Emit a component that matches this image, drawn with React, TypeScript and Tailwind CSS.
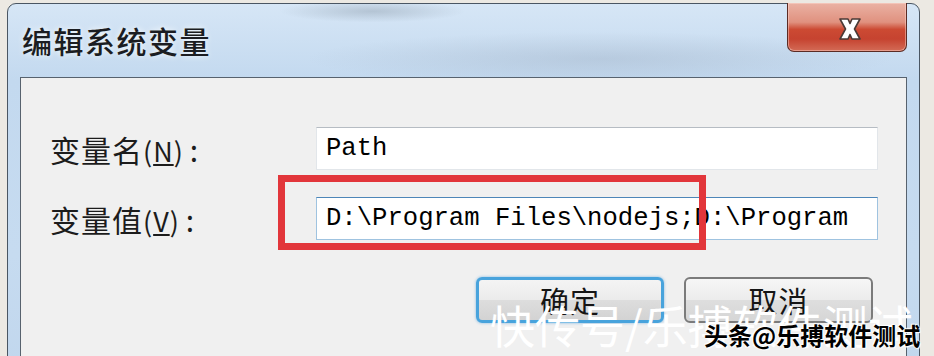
import React from 'react';

const cjk = "font-['Noto_Sans_CJK_SC','Noto_Sans',sans-serif]";
const mono = "font-['Liberation_Mono','DejaVu_Sans_Mono',monospace]";

const CloseIcon: React.FC = () => (
    <svg width="28" height="28" viewBox="0 0 28 28">
        <path
            d="M4 4 L12 4 L14 8.5 L16 4 L24 4 L18.5 14 L24 24 L16 24 L14 19.5 L12 24 L4 24 L9.5 14 Z"
            fill="#ffffff"
            stroke="#4a3a36"
            strokeWidth="1.6"
            strokeLinejoin="round"
        />
    </svg>
);

const Field: React.FC<{ label: string; hotkey: string; value: string; focused?: boolean }> = ({
    label,
    hotkey,
    value,
    focused,
}) => (
    <div className="flex items-center h-[43px]">
        <div className={`w-[266px] text-[30px] leading-none tracking-[1px] text-[#1c1c1c] ${cjk}`}>
            {label}
            <span className="text-[27px]">
                (<span className="underline underline-offset-2">{hotkey}</span>)
            </span>
            <span className="ml-[6px]">:</span>
        </div>
        <div
            className={`w-[562px] h-[43px] bg-white flex items-center pl-[9px] overflow-hidden whitespace-nowrap border ${
                focused
                    ? 'border-[#9fc3e0] border-t-[#4d86b8]'
                    : 'border-[#e2e6ea] border-t-[#b6bcc3]'
            }`}
        >
            <span className={`text-[25.6px] leading-none text-black ${mono}`}>{value}</span>
        </div>
    </div>
);

const App: React.FC = () => {
    return (
        <div className={`relative w-[934px] h-[356px] overflow-hidden bg-[#ece9e3] pl-[7px] pt-[3px] ${cjk}`}>
            <div className="w-[913px] h-[420px] rounded-t-[9px] border border-[#4a5663] bg-[linear-gradient(180deg,#d6e6f6_0%,#c3d9ef_18%,#c6dbf0_60%,#bfd5ec_100%)] flex flex-col">
                <div className="h-[73px] flex items-start justify-between pl-[14px] pr-[12px] bg-[radial-gradient(ellipse_at_40%_10%,rgba(120,135,150,0.35),transparent_12%),radial-gradient(ellipse_at_65%_75%,rgba(140,155,175,0.28),transparent_35%)]">
                    <div className="mt-[21px] text-[30px] leading-none font-medium tracking-[1.5px] text-[#1b1d22] [text-shadow:0_0_6px_rgba(255,255,255,0.9)]">
                        编辑系统变量
                    </div>
                    <div className="-mt-px w-[120px] h-[49px] rounded-b-[7px] border border-t-0 border-[#5b2b24] bg-[linear-gradient(180deg,#eab2a4_0%,#e0917f_40%,#cc4a33_55%,#c64330_75%,#d36b56_100%)] flex items-center justify-center shadow-[inset_0_0_0_1px_rgba(255,220,210,0.45)]">
                        <div className="ml-[6px] mt-[4px]">
                            <CloseIcon />
                        </div>
                    </div>
                </div>
                <div className="mx-[12px] flex-1 border border-[#57626e] bg-[#f0f0f0] pt-[49px] pl-[29px] pr-[28px]">
                    <div className="flex flex-col gap-[27px]">
                        <Field label="变量名" hotkey="N" value="Path" />
                        <Field label="变量值" hotkey="V" value="D:\Program Files\nodejs;D:\Program" focused />
                    </div>
                    <div className="flex justify-end gap-[20px] mt-[37px] mr-[5px]">
                        <div className="w-[188px] h-[46px] rounded-[6px] border-[3px] border-[#48a3dc] bg-[linear-gradient(180deg,#f4f4f4_0%,#ebebeb_50%,#dddddd_51%,#d3d3d3_100%)] flex items-center justify-center shadow-[0_0_3px_rgba(60,150,220,0.6)]">
                            <span className="text-[29px] leading-none tracking-[1px] text-[#151515]">确定</span>
                        </div>
                        <div className="w-[189px] h-[46px] rounded-[6px] border-2 border-[#7b7b7b] bg-[linear-gradient(180deg,#f6f6f6_0%,#ececec_50%,#dedede_51%,#d6d6d6_100%)] flex items-center justify-center">
                            <span className="text-[29px] leading-none tracking-[1px] text-[#151515]">取消</span>
                        </div>
                    </div>
                </div>
            </div>

            {/* red annotation box */}
            <div className="absolute left-[278px] top-[175px] w-[428px] h-[75px] border-[7px] border-[#e2363b]" />

            {/* watermark */}
            <div className="absolute left-[490px] top-[302px] text-[45px] leading-none font-normal text-white whitespace-nowrap">
                快传号/乐搏软件测试
            </div>
            <div className="absolute left-[704px] top-[323px] text-[24px] leading-none font-bold text-black whitespace-nowrap [text-shadow:0_0_2px_#fff,0_0_2px_#fff,1px_1px_1px_#fff,-1px_-1px_1px_#fff]">
                头条@乐搏软件测试
            </div>
        </div>
    );
};

export default App;
